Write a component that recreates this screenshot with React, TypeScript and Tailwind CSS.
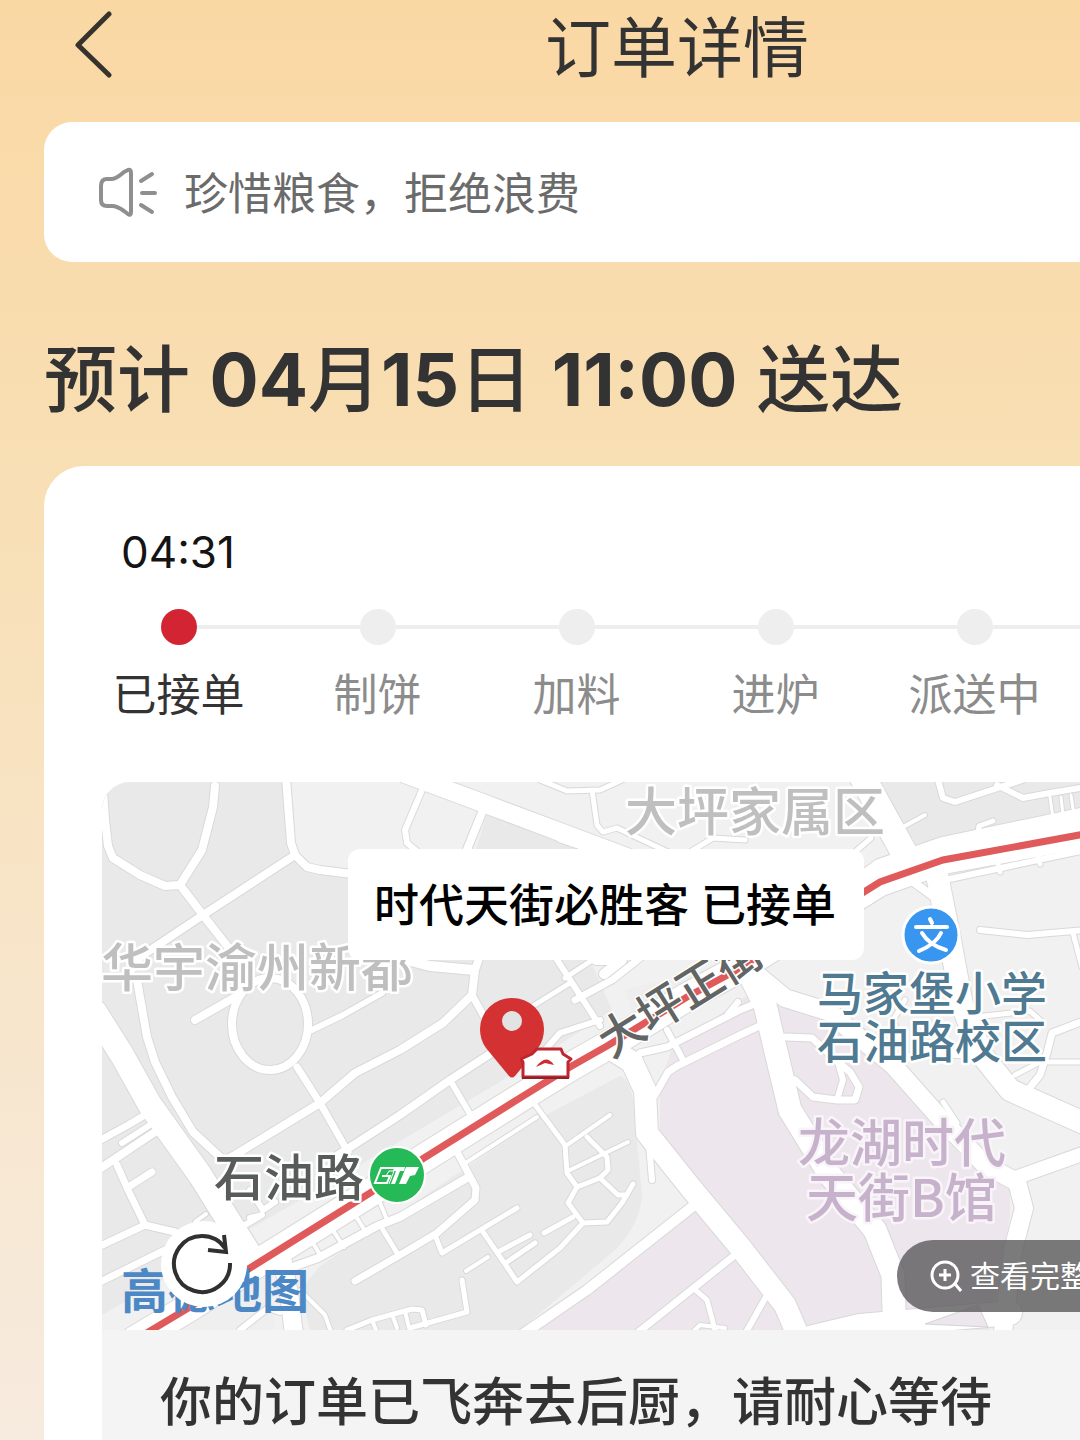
import React from "react";

type Road = [points: string, width: number];

const roads: Road[] = [
  // north-west blocks
  ["215,786 213,807 202,850 180,885", 8],
  ["103,790 105,820 108,846 113,858 140,875 165,886 180,885 203,915 228,947 240,962", 8],
  ["286,778 291,843 295,855 307,867 320,870 352,874", 8],
  ["295,855 203,915 140,957 128,975 137,980 141,1003 147,1037 155,1062 172,1097 193,1132 220,1157", 8],
  ["195,1020 237,996", 8],
  ["312,1030 343,1015 382,993", 6],
  ["225,1160 235,1155 320,1103 355,1073 400,1050 443,1023 472,995 475,970 480,955", 8],
  ["395,957 430,966 474,970", 10],
  ["472,995 486,1020", 7],
  ["297,1067 320,1103 348,1152", 7],
  ["338,1155 400,1115 450,1080 490,1054", 8],
  ["450,1080 470,1114", 6],
  ["95,1012 122,1055 150,1105 200,1175 250,1255", 24],
  ["95,1143 128,1125 150,1112", 7],
  ["122,1143 150,1125", 6],
  ["98,1170 155,1132", 8],
  ["117,1165 128,1190 145,1225", 7],
  ["130,1186 152,1172", 7],
  ["98,1247 145,1225 175,1232", 7],
  ["98,1283 165,1250", 7],
  ["245,1225 262,1215 250,1218", 6],
  ["250,1190 263,1210 275,1202", 6],
  ["195,1222 206,1214", 4],
  // south-west blocks
  ["283,1262 290,1300 294,1335", 18],
  ["240,1330 268,1308 280,1312", 6],
  ["300,1290 325,1315 332,1335", 4],
  ["290,1268 318,1258 377,1226 400,1217 467,1178", 8],
  ["355,1281 400,1255 437,1233 475,1200 476,1188 455,1148", 7],
  ["313,1243 322,1258", 4],
  ["334,1232 344,1247", 4],
  ["357,1218 367,1234", 4],
  ["380,1203 388,1222", 4],
  ["383,1230 397,1253", 5],
  ["467,1162 537,1117", 4],
  ["533,1102 565,1145 567,1173 577,1187 600,1178 608,1170 607,1157 587,1137", 5],
  ["567,1145 610,1115", 4],
  ["570,1170 628,1142", 4],
  ["577,1187 568,1203 583,1223 607,1222 622,1203 633,1184", 5],
  ["600,1178 618,1195 627,1195", 5],
  ["583,1223 560,1248 517,1282 507,1267 483,1232", 5],
  ["544,1233 573,1217", 5],
  ["517,1208 442,1253 435,1235", 5],
  ["498,1252 530,1235", 5],
  ["507,1262 535,1243", 5],
  ["466,1271 488,1257", 4],
  ["462,1280 467,1312 410,1328", 5],
  ["347,1330 372,1320 412,1309 422,1310 426,1325", 5],
  ["372,1320 376,1330", 4],
  ["392,1314 397,1328", 4],
  ["405,1311 409,1328", 4],
  ["520,1336 587,1290 697,1203", 10],
  ["636,1334 735,1255", 7],
  ["693,1288 707,1300 715,1330", 5],
  ["690,1335 700,1325 725,1328", 4],
  ["745,1334 767,1295", 6],
  // north blocks
  ["405,774 480,802 560,832 640,862", 18],
  ["422,790 405,830 407,843 418,852", 6],
  ["483,810 466,852", 8],
  ["540,780 567,791 600,790 622,780", 5],
  ["592,790 597,825 603,832 617,828 668,852", 5],
  ["690,852 713,838 745,840", 5],
  ["560,840 590,850", 5],
  ["862,776 908,860", 26],
  ["903,827 925,815", 4],
  ["855,852 871,838", 5],
  ["977,838 979,826 993,821", 5],
  ["938,780 943,798 955,802 1022,780", 6],
  ["997,785 1023,798 1050,793 1086,787", 6],
  ["1050,797 1054,826", 3],
  ["1061,797 1064,824", 3],
  ["1071,795 1075,822", 3],
  ["945,880 1085,850", 6],
  ["997,860 1000,872", 5],
  ["1037,852 1040,864", 5],
  ["905,876 938,900", 8],
  // blocks behind the store
  ["552,952 600,1026", 6],
  ["565,978 600,955", 5],
  ["520,1014 570,983", 5],
  ["575,1000 612,980 640,958", 7],
  ["596,960 622,960 604,974", 10],
  ["545,1050 560,1033 600,1020", 6],
  // eastern avenues
  ["606,1046 632,1062 645,1090 647,1133 690,1187 740,1247 785,1305 800,1340", 22],
  ["648,1133 652,1180", 6],
  ["640,1053 667,1047 740,1010 764,1000", 7],
  ["655,1095 668,1072 677,1066 740,1035 768,1022", 7],
  ["667,1030 683,1060", 6],
  ["745,965 765,1005 778,1060 790,1110 830,1175 875,1230 893,1275 894,1310", 23],
  ["738,1002 728,1014", 6],
  ["745,965 785,998 830,1012 850,1030 893,1065 940,1118 985,1165 1017,1182 1024,1208 1013,1250 1002,1340", 18],
  ["1015,1178 1088,1152", 14],
  ["936,870 950,940 962,1005 982,1055 1010,1090 1088,1125", 22],
  ["893,1065 920,1052 975,1055", 8],
  ["905,1000 893,1020 900,1040", 5],
  ["980,930 1027,935 1086,930", 6],
  ["1073,933 1082,967", 5],
  ["975,1017 1030,1011 1040,1020", 5],
  ["1086,1020 1052,1033 1047,1053 1040,1075 1028,1090", 7],
  ["1015,1075 1040,1062 1086,1062", 5],
  ["943,1102 957,1123", 5],
  ["795,1080 813,1097 837,1100 855,1100 859,1087 850,1072 838,1062 812,1038 786,1037", 7],
  ["838,1062 843,1080 837,1100", 6],
  ["780,1345 860,1326 1010,1313", 24],
];

const mainRoad =
  "135,1340 190,1307 250,1268 370,1193 424,1158 520,1098 570,1067 607,1046 630,1032 687,997 733,972 800,930 864,892 880,882 943,860 1090,833";
const avenue = "850,890 880,868 943,846 1090,815";

const steps = [
  { label: "已接单", active: true },
  { label: "制饼", active: false },
  { label: "加料", active: false },
  { label: "进炉", active: false },
  { label: "派送中", active: false },
];

function RoadLayer({ casing }: { casing: boolean }) {
  const extra = casing ? 2 : 0;
  return (
    <g
      fill="none"
      stroke={casing ? "#d8d9d8" : "#ffffff"}
      strokeLinecap="round"
      strokeLinejoin="round"
    >
      {roads.map(([points, width]) => (
        <polyline key={points} points={points} strokeWidth={width + extra} />
      ))}
      <ellipse cx="270" cy="1024" rx="38" ry="46" strokeWidth={8 + extra} />
      <polyline points={mainRoad} strokeWidth={28 + extra} />
      <polyline points={avenue} strokeWidth={18 + extra} />
    </g>
  );
}

function MapDrawing() {
  return (
    <svg
      className="block h-[548px] w-full"
      viewBox="102 782 978 548"
      preserveAspectRatio="xMinYMin slice"
      role="img"
      aria-label="配送地图"
      fontFamily="'Noto Sans CJK SC', sans-serif"
    >
      <rect x="102" y="782" width="1800" height="1000" fill="#f0f1f0" />
      <g fill="#e9e9e9">
        <path d="M102 782H289L295 855L312 869L350 874V960H590L612 1010L540 1058L360 1165L245 1232L102 1315Z" />
        <path d="M320 1266L540 1118L620 1076Q632 1080 634 1110L642 1195Q640 1225 615 1250L520 1330H310L300 1290Z" />
        <path d="M487 814L575 848V852H475Z" />
        <path d="M876 782H1080V815L918 847Z" />
        <path d="M180 1330L270 1270L275 1330Z" fill="#eeefee" />
        <path d="M625 990L745 960L760 975L640 1035Z" fill="#eeeeee" />
      </g>
      <path
        d="M660 1085L672 1048L740 1000L765 985L870 1030L905 1080L960 1155L1010 1190L1010 1215L990 1330H535L697 1207L660 1135Z"
        fill="#ede6ed"
      />
      <RoadLayer casing />
      <RoadLayer casing={false} />
      <path d="M925 1324L978 1305L988 1327Z" fill="#ede6ed" stroke="#d3d4d3" />
      <polyline points={mainRoad} fill="none" stroke="#e05a5c" strokeWidth="7" />

      <g stroke="#ffffff" strokeWidth="5" strokeLinejoin="round" paintOrder="stroke" fontWeight="500">
        <text x="625" y="831" fontSize="52" fill="#bfbfbf">大坪家属区</text>
        <text x="101" y="987" fontSize="52" fill="#bfbfbf">华宇渝州新都</text>
        <text x="817" y="1010" fontSize="46" fill="#4f7a92">马家堡小学</text>
        <text x="817" y="1058" fontSize="46" fill="#4f7a92">石油路校区</text>
        <text x="214" y="1196" fontSize="50" fill="#575b5a">石油路</text>
        <text x="798" y="1162" fontSize="52" fill="#c7b2cb" stroke="#f9f4f9">龙湖时代</text>
        <text x="806" y="1217" fontSize="52" fill="#c7b2cb" stroke="#f9f4f9">天街B馆</text>
        <text transform="translate(611 1059) rotate(-32)" fontSize="46" fill="#636564" strokeWidth="3">大坪正街</text>
      </g>
      <text x="121" y="1308" fontSize="47" fontWeight="700" fill="#4d88c6">高德地图</text>

      {/* school */}
      <circle cx="931" cy="935" r="28" fill="#3896f0" stroke="#ffffff" strokeWidth="3" />
      <g stroke="#ffffff" strokeWidth="4" strokeLinecap="round" fill="none">
        <path d="M930 919L932 923M916 927H947M922 933Q929 945 946 950M941 933Q936 944 919 951" />
      </g>

      {/* metro station */}
      <circle cx="397" cy="1175" r="28" fill="#26b957" stroke="#ffffff" strokeWidth="2" />
      <path d="M396 1168H381L375 1183H387L390 1176H382" fill="none" stroke="#ffffff" strokeWidth="2" />
      <path d="M386 1176L389 1171H394L389 1184" fill="none" stroke="#ffffff" strokeWidth="1" />
      <path d="M394 1167H405L404 1171H400L395 1184H391L396 1171H393Z" fill="#ffffff" />
      <path d="M406 1167H419L415 1175L410 1176L406 1184H399Z" fill="#ffffff" />

      {/* store pin */}
      <path d="M509 1076L486 1048Q480 1040 480 1029A32 31 0 0 1 544 1029Q544 1040 538 1048L515 1076Q512 1079 509 1076Z" fill="#d33132" />
      <circle cx="512" cy="1021" r="10" fill="#e3e3e3" />
      <path
        d="M537 1049H561L563 1054L571 1059L568 1062V1077H523V1062L521 1059L532 1054Z"
        fill="#ffffff"
        stroke="#bd2731"
        strokeWidth="3"
        strokeLinejoin="round"
      />
      <path d="M522 1078H569" stroke="#8d2129" strokeWidth="2" />
      <path d="M536 1067Q546 1053 554 1065L545 1063Z" fill="#cf2b34" />
    </svg>
  );
}

function OrderMap() {
  return (
    <div className="relative overflow-hidden rounded-tl-[28px]">
      <MapDrawing />
      <div className="absolute left-[246px] top-[67px] flex h-[111px] w-[516px] items-center rounded-xl bg-white pt-0.5 pl-[26px] text-[45px] font-medium whitespace-nowrap text-black">
        时代天街必胜客 已接单
      </div>
      <button
        type="button"
        aria-label="刷新地图"
        className="absolute bottom-[23px] left-[59px] flex size-[86px] items-center justify-center rounded-full bg-white"
      >
        <svg viewBox="0 0 86 86" className="size-full" fill="none" stroke="#2f3130" strokeWidth="4">
          <path d="M69 42A28 28 0 1 1 64 27" />
          <path d="M47 29L65 31L63 14" />
        </svg>
      </button>
      <button
        type="button"
        className="absolute top-[458px] left-[795px] flex h-[72px] items-center gap-2 rounded-l-full bg-[#5a5a5a]/80 pl-[33px] text-[30px] whitespace-nowrap text-white"
      >
        <svg viewBox="0 0 32 34" className="h-[34px] w-8" fill="none" stroke="currentColor" strokeWidth="3">
          <circle cx="15" cy="16" r="13" />
          <path d="M15 10V22M9 16H21M25 25L31 32" />
        </svg>
        查看完整
      </button>
    </div>
  );
}

export default function App() {
  return (
    <main className="flex min-h-screen flex-col overflow-hidden bg-linear-to-b from-[#fad8a4] via-[#f8dfb5] via-35% to-[#f7ebdf] font-['Inter','Noto_Sans_CJK_SC',sans-serif] text-[#333333]">
      <header className="grid grid-cols-[1fr_auto_1fr] items-start pb-[26px] pl-[74px]">
        <button type="button" aria-label="返回" className="w-[38px] pt-[10px]">
          <svg
            viewBox="0 0 38 68"
            className="h-[68px] w-[38px]"
            fill="none"
            stroke="#36332e"
            strokeWidth="5"
            strokeLinecap="round"
            strokeLinejoin="round"
          >
            <path d="M35 4L4 35L35 65" />
          </svg>
        </button>
        <h1 className="ml-[200px] text-[66px] leading-[96px] font-normal">订单详情</h1>
      </header>

      <section className="ml-11 flex h-[140px] items-center gap-[26px] rounded-l-[28px] bg-white pl-[54px]">
        <svg
          viewBox="0 0 60 50"
          className="h-[50px] w-[60px]"
          fill="none"
          stroke="#8f8f8f"
          strokeWidth="4"
          strokeLinecap="round"
          strokeLinejoin="round"
          aria-hidden="true"
        >
          <path d="M3 19Q3 12 9 12H14Q18 12 26 5L30 3Q33 2 33 6V45Q33 49 30 47L26 44Q19 39 14 39H9Q3 39 3 33Z" />
          <path d="M43 14L54 7M44 26H57M43 38L54 45" />
        </svg>
        <p className="pt-1 text-[44px] leading-[60px] text-[#6b6b6b]">珍惜粮食，拒绝浪费</p>
      </section>

      <h2 className="pt-[74px] pb-[42px] pl-11 text-[73px] leading-[88px] font-medium whitespace-nowrap">
        预计 <span className="font-bold">04</span>月<span className="font-bold">15</span>日{" "}
        <span className="font-bold">11:00</span> 送达
      </h2>

      <section className="ml-11 flex grow flex-col rounded-tl-[40px] bg-white">
        <time className="pt-14 pl-[77px] text-[44px] leading-[60px] text-[#141414]">04:31</time>
        <ol className="grid grid-cols-5 pt-[27px] pr-1.5 pl-[35px]">
          {steps.map(({ label, active }, index) => (
            <li key={label} className="flex flex-col items-center">
              <div className="flex w-full items-center">
                <span className={index === 0 ? "h-1 flex-1" : "h-1 flex-1 bg-[#eeeeee]"} />
                <span className={active ? "size-9 rounded-full bg-[#d22432]" : "size-9 rounded-full bg-[#eeeeee]"} />
                <span className="flex h-1 flex-1">
                  <span
                    className={
                      index === steps.length - 1
                        ? "-mr-1.5 h-1 flex-1 bg-[#eeeeee]"
                        : "h-1 flex-1 bg-[#eeeeee]"
                    }
                  />
                </span>
              </div>
              <span
                className={
                  active
                    ? "pt-5 text-[44px] leading-[60px] whitespace-nowrap"
                    : "pt-5 text-[44px] leading-[60px] whitespace-nowrap text-[#8c8c8c]"
                }
              >
                {label}
              </span>
            </li>
          ))}
        </ol>
        <div className="mt-[57px] ml-[58px] flex grow flex-col bg-[#f4f4f4]">
          <div className="bg-white">
            <OrderMap />
          </div>
          <p className="pt-[37px] pl-[58px] text-[52px] leading-[72px] font-medium whitespace-nowrap">
            你的订单已飞奔去后厨，请耐心等待
          </p>
        </div>
      </section>
    </main>
  );
}
